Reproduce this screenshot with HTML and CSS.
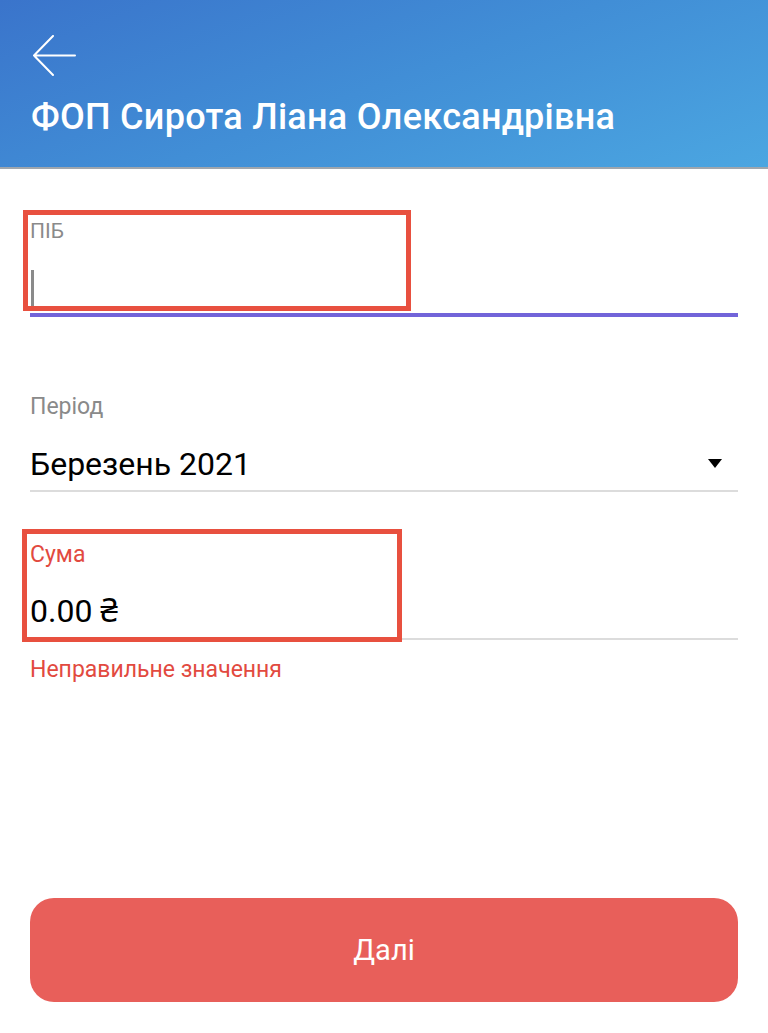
FILE: index.html
```html
<!DOCTYPE html>
<html lang="uk">
<head>
<meta charset="utf-8">
<title>ФОП Сирота Ліана Олександрівна</title>
<link rel="stylesheet" href="styles.css">
</head>
<body>
<div class="screen">
  <header class="header">
    <svg class="back" width="44" height="42" viewBox="0 0 44 42" aria-hidden="true">
      <path d="M21 1 L2 20.5 L21 40 M2 20.5 H43" fill="none" stroke="#fff" stroke-width="2" stroke-linecap="round" stroke-linejoin="round"/>
    </svg>
    <h1 class="title">ФОП Сирота Ліана Олександрівна</h1>
  </header>

  <main class="form">
    <div class="field field-name">
      <div class="label label-small">ПІБ</div>
      <div class="input input-focus"><span class="cursor"></span></div>
      <div class="mark mark-name"></div>
    </div>

    <div class="field field-period">
      <div class="label">Період</div>
      <div class="input input-select">
        <span class="value">Березень 2021</span>
        <span class="caret"></span>
      </div>
    </div>

    <div class="field field-sum">
      <div class="label label-error">Сума</div>
      <div class="input input-sum"><span class="value">0.00 ₴</span></div>
      <div class="error">Неправильне значення</div>
      <div class="mark mark-sum"></div>
    </div>
  </main>

  <div class="actions">
    <button class="btn" type="button">Далі</button>
  </div>
</div>
</body>
</html>
```

FILE: styles.css
```css
* { box-sizing: border-box; }
html, body { margin: 0; padding: 0; background: #fff; }
body { font-family: Roboto, "Noto Sans", "DejaVu Sans", sans-serif; color: #000; }

.screen { width: 768px; height: 1033px; display: flex; flex-direction: column; }

.header {
  height: 169px;
  background: linear-gradient(160deg, #3a74cb 0%, #418ed6 50%, #4ba6e1 100%);
  border-bottom: 2px solid #9fa6ad;
  padding: 35px 31px 0;
}
.back { display: block; margin-left: 1px; }
.title {
  margin: 19px 0 0;
  color: #fff;
  font-size: 36px;
  font-weight: 500;
  line-height: 42px;
  letter-spacing: 0.27px;
  white-space: nowrap;
}

.form { padding: 0 30px; }
.field { position: relative; }
.label { font-size: 23px; line-height: 28px; color: #8a8a8a; }
.label-small { font-size: 21px; line-height: 24px; }
.label-error { color: #e24a3f; }

.field-name { padding-top: 50px; }
.field-period { padding-top: 76px; }
.field-sum { padding-top: 49px; }

.input {
  display: flex;
  align-items: center;
  height: 71px;
  border-bottom: 2px solid #dcdcdc;
}
.input-focus { height: 74px; border-bottom: 4px solid #7264d9; padding-top: 20px; }
.cursor { display: block; width: 3px; height: 36px; background: #8a8a8a; margin-left: 1px; }
.value { font-size: 32px; line-height: 38px; }
.input-select { justify-content: space-between; padding-top: 17px; }
.input-sum { padding-top: 15px; }
.caret {
  width: 0; height: 0;
  border-left: 7px solid transparent;
  border-right: 7px solid transparent;
  border-top: 9px solid #000;
  margin-right: 16px;
  margin-bottom: 2px;
}
.error { margin-top: 16px; font-size: 23px; line-height: 28px; color: #e24a3f; }

.mark { position: absolute; border: 5px solid #e8503f; pointer-events: none; }
.mark-name { left: -7px; top: 41px; width: 388px; height: 101px; }
.mark-sum { left: -8px; top: 37px; width: 380px; height: 113px; }

.actions { margin-top: auto; padding: 0 30px 31px; }
.btn {
  display: block;
  width: 100%;
  height: 104px;
  border: 0;
  border-radius: 24px;
  background: #e85f5a;
  color: #fff;
  font-family: inherit;
  font-size: 29px;
  font-weight: 400;
}
```
